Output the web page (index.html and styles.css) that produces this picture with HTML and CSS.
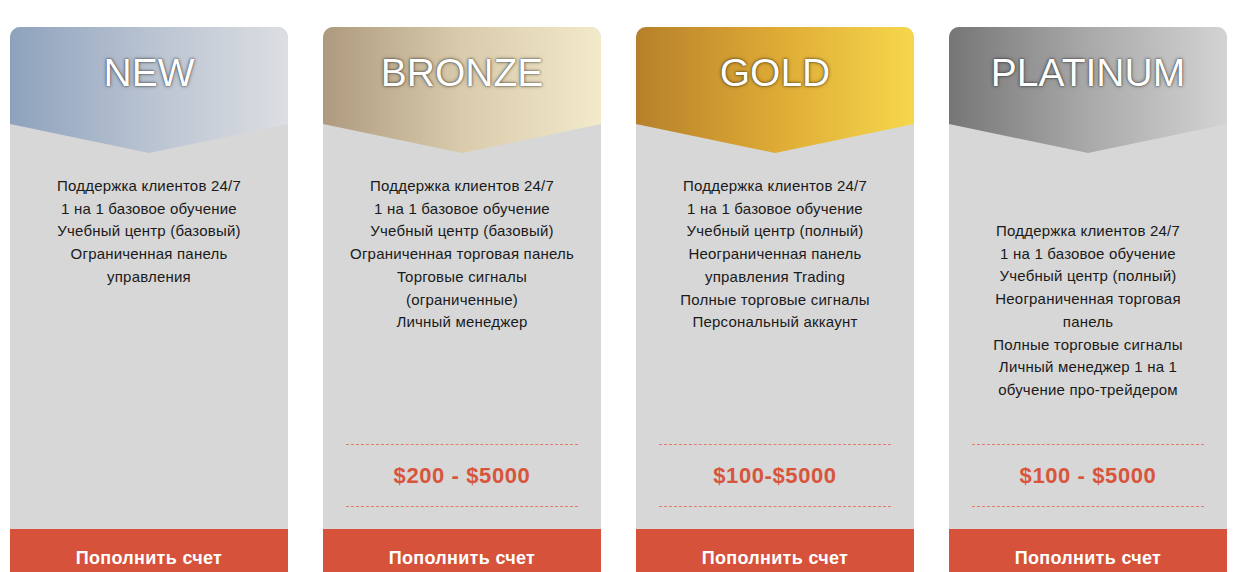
FILE: index.html
```html
<!DOCTYPE html>
<html lang="ru">
<head>
<meta charset="utf-8">
<title>Тарифы</title>
<link rel="stylesheet" href="styles.css">
</head>
<body>
<div class="plans">
  <div class="card">
    <div class="head head-new"><span class="title">NEW</span></div>
    <ul class="features">
      <li>Поддержка клиентов 24/7</li>
      <li>1 на 1 базовое обучение</li>
      <li>Учебный центр (базовый)</li>
      <li>Ограниченная панель<br>управления</li>
    </ul>
    <a class="btn">Пополнить счет</a>
  </div>
  <div class="card">
    <div class="head head-bronze"><span class="title">BRONZE</span></div>
    <ul class="features">
      <li>Поддержка клиентов 24/7</li>
      <li>1 на 1 базовое обучение</li>
      <li>Учебный центр (базовый)</li>
      <li>Ограниченная торговая панель</li>
      <li>Торговые сигналы<br>(ограниченные)</li>
      <li>Личный менеджер</li>
    </ul>
    <div class="price">$200 - $5000</div>
    <a class="btn">Пополнить счет</a>
  </div>
  <div class="card">
    <div class="head head-gold"><span class="title">GOLD</span></div>
    <ul class="features">
      <li>Поддержка клиентов 24/7</li>
      <li>1 на 1 базовое обучение</li>
      <li>Учебный центр (полный)</li>
      <li>Неограниченная панель<br>управления Trading</li>
      <li>Полные торговые сигналы</li>
      <li>Персональный аккаунт</li>
    </ul>
    <div class="price">$100-$5000</div>
    <a class="btn">Пополнить счет</a>
  </div>
  <div class="card">
    <div class="head head-platinum"><span class="title">PLATINUM</span></div>
    <ul class="features features-low">
      <li>Поддержка клиентов 24/7</li>
      <li>1 на 1 базовое обучение</li>
      <li>Учебный центр (полный)</li>
      <li>Неограниченная торговая<br>панель</li>
      <li>Полные торговые сигналы</li>
      <li>Личный менеджер 1 на 1<br>обучение про-трейдером</li>
    </ul>
    <div class="price">$100 - $5000</div>
    <a class="btn">Пополнить счет</a>
  </div>
</div>
</body>
</html>
```
FILE: styles.css
```css
html, body {
  margin: 0;
  padding: 0;
  background: #ffffff;
  overflow: hidden;
}
body {
  font-family: "Liberation Sans", Arial, sans-serif;
  color: #222;
}
.plans {
  display: grid;
  grid-template-columns: repeat(4, 278px);
  column-gap: 35px;
  padding: 27px 0 0 10px;
}
.card {
  height: 560px;
  background: #d7d7d7;
  border-radius: 10px 10px 0 0;
  display: flex;
  flex-direction: column;
  overflow: hidden;
}
.head {
  height: 126px;
  flex: none;
  clip-path: polygon(0 0, 100% 0, 100% 77%, 50% 100%, 0 77%);
  text-align: center;
  padding-top: 26px;
  box-sizing: border-box;
}
.head-new { background: linear-gradient(90deg, #8ea2bd 0%, #b9c3d1 50%, #dcdee2 100%); }
.head-bronze { background: linear-gradient(90deg, #ae9a7f 0%, #d9cbab 50%, #f2eacb 100%); }
.head-gold { background: linear-gradient(90deg, #b6802a 0%, #deaa35 50%, #f6d74c 100%); }
.head-platinum { background: linear-gradient(90deg, #767676 0%, #a9a9a9 50%, #d3d3d3 100%); }
.title {
  display: block;
  font-size: 39px;
  line-height: 39px;
  color: #fff;
  text-shadow: 0 0 2px rgba(0,0,0,0.75), 0 0 4px rgba(0,0,0,0.35);
}
.features {
  list-style: none;
  margin: 0;
  padding: 22px 10px 0;
  text-align: center;
  font-size: 15px;
  letter-spacing: 0.2px;
  line-height: 22.7px;
  color: #1a1a1a;
  white-space: nowrap;
}
.features-low { padding-top: 67px; }
.price {
  margin: auto 23px 22px;
  height: 61px;
  border-top: 1px dashed #e27c66;
  border-bottom: 1px dashed #e27c66;
  display: flex;
  align-items: center;
  justify-content: center;
  font-weight: 700;
  font-size: 22px;
  letter-spacing: 0.6px;
  color: #d8553c;
}
.btn {
  margin-top: auto;
  height: 58px;
  flex: none;
  background: #d6523a;
  color: #fff;
  font-weight: 700;
  font-size: 18px;
  letter-spacing: 0.3px;
  text-align: center;
  padding-top: 18px;
  box-sizing: border-box;
  line-height: 22px;
}
.price + .btn { margin-top: 0; }
```
